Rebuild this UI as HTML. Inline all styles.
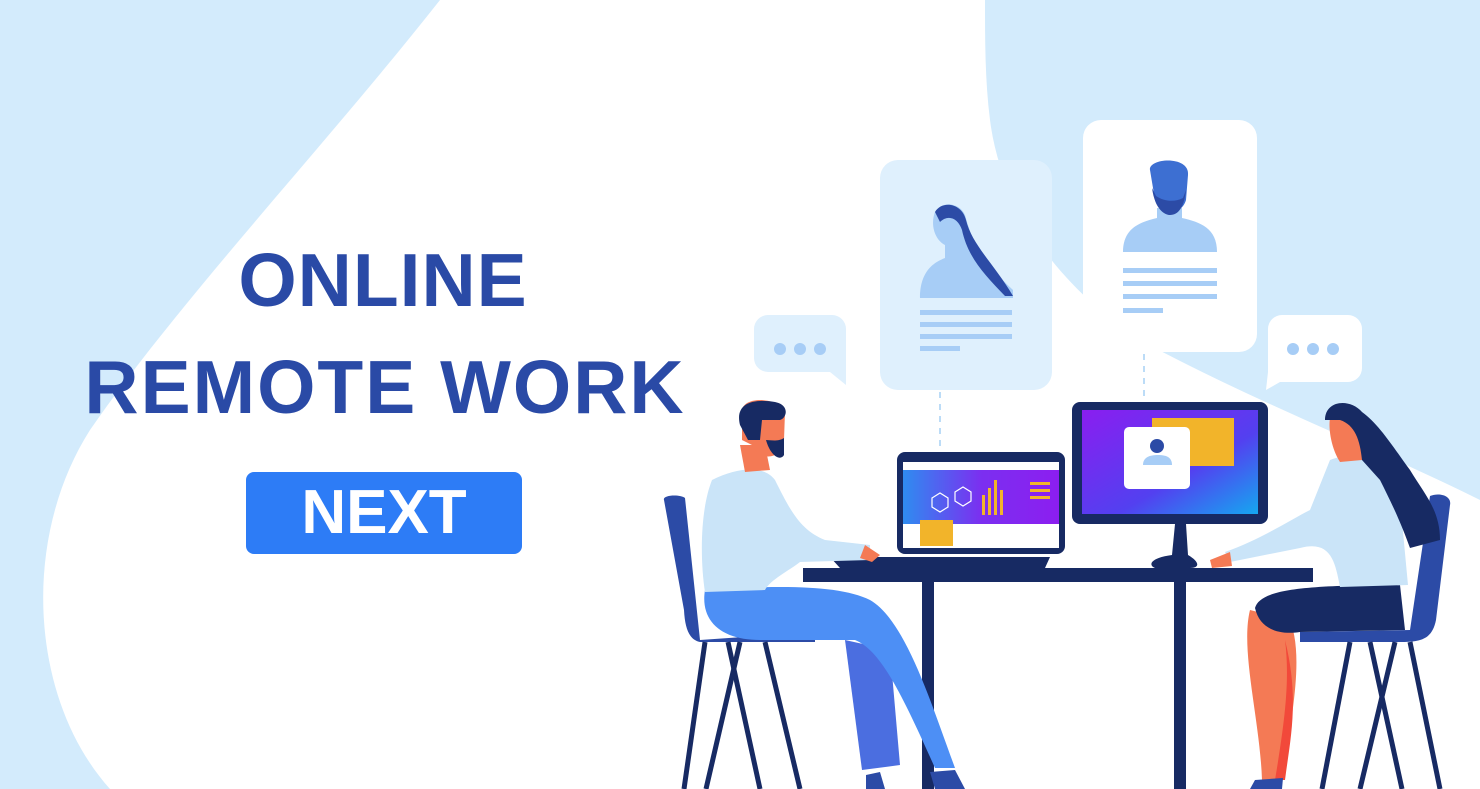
<!DOCTYPE html>
<html><head><style>
html,body{margin:0;padding:0;width:1480px;height:789px;overflow:hidden;background:#fff}
svg{position:absolute;left:0;top:0}
.t{position:absolute;font-family:"Liberation Sans",sans-serif;font-weight:bold;color:#2a4aa6;text-align:center}
</style></head><body>
<svg width="1480" height="789" viewBox="0 0 1480 789">
<rect width="1480" height="789" fill="#fff"/>
<path d="M0 0 L440 0 C330 140 180 300 90 430 C20 540 30 700 110 789 L0 789Z" fill="#d3ebfc"/>
<path d="M985 0 L1480 0 L1480 500 C1380 450 1250 400 1140 340 C1050 280 1000 200 990 120 C985 80 985 40 985 0Z" fill="#d3ebfc"/>
<rect x="880" y="160" width="172" height="230" rx="18" fill="#dff0fd"/>
<path d="M920 298 C920 270 935 262 945 258 L945 245 C935 240 930 225 935 212 C942 200 960 203 965 215 C970 232 975 255 1013 290 L1013 298Z" fill="#a7cdf6"/>
<path d="M935 212 C942 200 962 203 966 220 C972 245 995 265 1013 296 L1005 296 C985 275 968 258 962 230 C958 218 948 214 940 222Z" fill="#2c4ba6"/>
<g fill="#a7cdf6"><rect x="920" y="310" width="92" height="5"/><rect x="920" y="322" width="92" height="5"/><rect x="920" y="334" width="92" height="5"/><rect x="920" y="346" width="40" height="5"/></g>
<rect x="1083" y="120" width="174" height="232" rx="18" fill="#fff"/>
<path d="M1123 252 C1123 228 1140 222 1157 218 L1157 208 L1182 208 L1182 218 C1200 222 1217 228 1217 252Z" fill="#a7cdf6"/>
<path d="M1150 170 C1148 158 1190 155 1188 175 L1186 200 C1182 215 1160 218 1155 200Z" fill="#3d6fd2"/>
<path d="M1152 188 C1155 210 1165 215 1170 215 C1178 215 1184 208 1186 190 L1183 198 C1175 202 1165 202 1156 196Z" fill="#2c4ba6"/>
<g fill="#a7cdf6"><rect x="1123" y="268" width="94" height="5"/><rect x="1123" y="281" width="94" height="5"/><rect x="1123" y="294" width="94" height="5"/><rect x="1123" y="308" width="40" height="5"/></g>
<path d="M768 315 H832 A14 14 0 0 1 846 329 V385 L830 372 H768 A14 14 0 0 1 754 358 V329 A14 14 0 0 1 768 315Z" fill="#dff0fd"/>
<g fill="#a7cdf6"><circle cx="780" cy="349" r="6"/><circle cx="800" cy="349" r="6"/><circle cx="820" cy="349" r="6"/></g>
<path d="M1282 315 H1348 A14 14 0 0 1 1362 329 V368 A14 14 0 0 1 1348 382 H1280 L1266 390 L1268 372 V329 A14 14 0 0 1 1282 315Z" fill="#fff"/>
<g fill="#a7cdf6"><circle cx="1293" cy="349" r="6"/><circle cx="1313" cy="349" r="6"/><circle cx="1333" cy="349" r="6"/></g>
<g stroke="#bcdcf7" stroke-width="2" stroke-dasharray="6 6"><line x1="940" y1="392" x2="940" y2="448"/><line x1="1144" y1="354" x2="1144" y2="400"/></g>
<rect x="803" y="568" width="510" height="14" fill="#172a63"/>
<rect x="922" y="580" width="12" height="209" fill="#172a63"/>
<rect x="1174" y="580" width="12" height="209" fill="#172a63"/>
<rect x="897" y="452" width="168" height="102" rx="8" fill="#172a63"/>
<rect x="903" y="462" width="156" height="86" fill="#fff"/>
<defs><linearGradient id="g1" x1="0" x2="1"><stop offset="0" stop-color="#2f8cf0"/><stop offset=".5" stop-color="#7b2ff0"/><stop offset="1" stop-color="#8c1ef0"/></linearGradient>
<linearGradient id="g2" x1="0" x2="1" y1="0" y2="1"><stop offset="0" stop-color="#8a1ef0"/><stop offset=".6" stop-color="#5340f0"/><stop offset="1" stop-color="#15a7f0"/></linearGradient></defs>
<rect x="903" y="470" width="156" height="54" fill="url(#g1)"/>
<rect x="920" y="520" width="33" height="26" fill="#f2b42a"/>
<g fill="#f2b42a"><rect x="982" y="495" width="3" height="20"/><rect x="988" y="488" width="3" height="27"/><rect x="994" y="480" width="3" height="35"/><rect x="1000" y="490" width="3" height="25"/><rect x="1030" y="482" width="20" height="3"/><rect x="1030" y="489" width="20" height="3"/><rect x="1030" y="496" width="20" height="3"/></g>
<path d="M932 498 l8 -5 8 5 0 9 -8 5 -8 -5z M955 492 l8 -5 8 5 0 9 -8 5 -8 -5z" fill="none" stroke="#fff" stroke-width="1.2"/>
<path d="M830 557 H1050 L1045 568 H840Z" fill="#172a63"/>
<rect x="1072" y="402" width="196" height="122" rx="8" fill="#172a63"/>
<rect x="1082" y="410" width="176" height="104" fill="url(#g2)"/>
<rect x="1152" y="418" width="82" height="48" fill="#f2b42a"/>
<rect x="1124" y="427" width="66" height="62" rx="5" fill="#fff"/>
<path d="M1143 465 C1143 457 1150 455 1158 455 C1166 455 1172 457 1172 465Z" fill="#a7cdf6"/>
<circle cx="1157" cy="446" r="7" fill="#2c4ba6"/>
<path d="M1175 524 H1186 L1188 555 C1200 562 1200 568 1190 568 H1155 C1148 565 1150 558 1172 555Z" fill="#172a63"/>
<path d="M664 500 C662 495 680 494 685 498 L700 640 L815 632 L815 642 H700 C690 640 685 630 684 610Z" fill="#2c4ba6"/>
<g stroke="#172a63" stroke-width="5"><line x1="705" y1="642" x2="684" y2="789"/><line x1="728" y1="642" x2="760" y2="789"/><line x1="740" y1="642" x2="706" y2="789"/><line x1="765" y1="642" x2="800" y2="789"/></g>
<path d="M845 640 L890 650 L900 765 L862 770Z" fill="#4b6ee0"/>
<path d="M705 590 C700 620 720 640 760 640 L855 640 C880 650 900 690 935 768 L955 768 C930 700 905 620 870 600 C840 585 780 585 705 590Z" fill="#4d8ff5"/>
<path d="M712 480 C740 466 765 466 775 480 C790 510 800 530 825 540 L870 545 L870 560 L800 562 C790 570 770 580 765 590 L705 592 C700 560 700 510 712 480Z" fill="#cae4f8"/>
<path d="M740 445 L765 445 L770 470 L745 472Z" fill="#f47a55"/>
<path d="M742 410 C745 395 780 398 785 412 L784 440 C782 460 760 462 752 445 L742 440Z" fill="#f47a55"/>
<path d="M740 425 C735 405 750 398 775 402 C790 405 787 418 780 420 L762 420 L760 440 L748 440Z M766 440 C770 455 780 462 784 455 L784 438 C778 442 770 440 766 440Z" fill="#172a63"/>
<path d="M865 545 L880 555 L872 562 L860 558Z" fill="#f47a55"/>
<path d="M866 775 L880 772 L885 789 H866Z M930 772 L955 770 L965 789 H935Z" fill="#2c4ba6"/>
<path d="M1430 496 C1440 492 1452 496 1450 505 L1436 620 C1432 640 1420 642 1400 642 H1300 L1300 632 L1410 630Z" fill="#2c4ba6"/>
<g stroke="#172a63" stroke-width="5"><line x1="1350" y1="642" x2="1322" y2="789"/><line x1="1370" y1="642" x2="1402" y2="789"/><line x1="1395" y1="642" x2="1360" y2="789"/><line x1="1410" y1="642" x2="1440" y2="789"/></g>
<path d="M1250 610 C1240 650 1260 720 1262 780 L1283 780 C1290 720 1305 660 1290 620Z" fill="#f47a55"/>
<path d="M1285 640 C1300 700 1290 740 1285 780 L1275 780 C1285 720 1290 680 1285 640Z" fill="#f2493a"/>
<path d="M1255 608 C1260 590 1300 585 1400 585 L1405 630 L1300 632 C1280 635 1260 630 1255 608Z" fill="#172a63"/>
<path d="M1330 460 C1370 445 1395 470 1400 500 L1408 585 L1340 587 C1335 560 1330 540 1300 548 L1230 562 L1225 552 C1260 540 1290 520 1310 510Z" fill="#cae4f8"/>
<path d="M1210 560 L1230 552 L1232 566 L1212 568Z" fill="#f47a55"/>
<path d="M1330 418 C1335 405 1360 405 1362 430 L1362 460 L1340 462 C1332 450 1328 430 1330 418Z" fill="#f47a55"/>
<path d="M1325 420 C1325 400 1350 398 1362 412 C1380 425 1395 450 1410 470 C1425 495 1440 510 1440 540 L1410 548 C1400 520 1390 500 1380 480 L1362 460 C1360 440 1355 425 1340 420Z" fill="#172a63"/>
<path d="M1255 780 L1283 778 L1282 789 H1250Z" fill="#2c4ba6"/>
<rect x="246" y="472" width="276" height="82" rx="8" fill="#2d7cf6"/>
</svg>
<div class="t" style="left:83px;top:240px;width:600px;font-size:75px;line-height:80px;letter-spacing:1px">ONLINE</div>
<div class="t" style="left:60px;top:347px;width:650px;font-size:75px;line-height:80px;letter-spacing:2px">REMOTE WORK</div>
<div class="t" style="left:246px;top:472px;width:276px;font-size:62px;line-height:82px;color:#fff">NEXT</div>
</body></html>
